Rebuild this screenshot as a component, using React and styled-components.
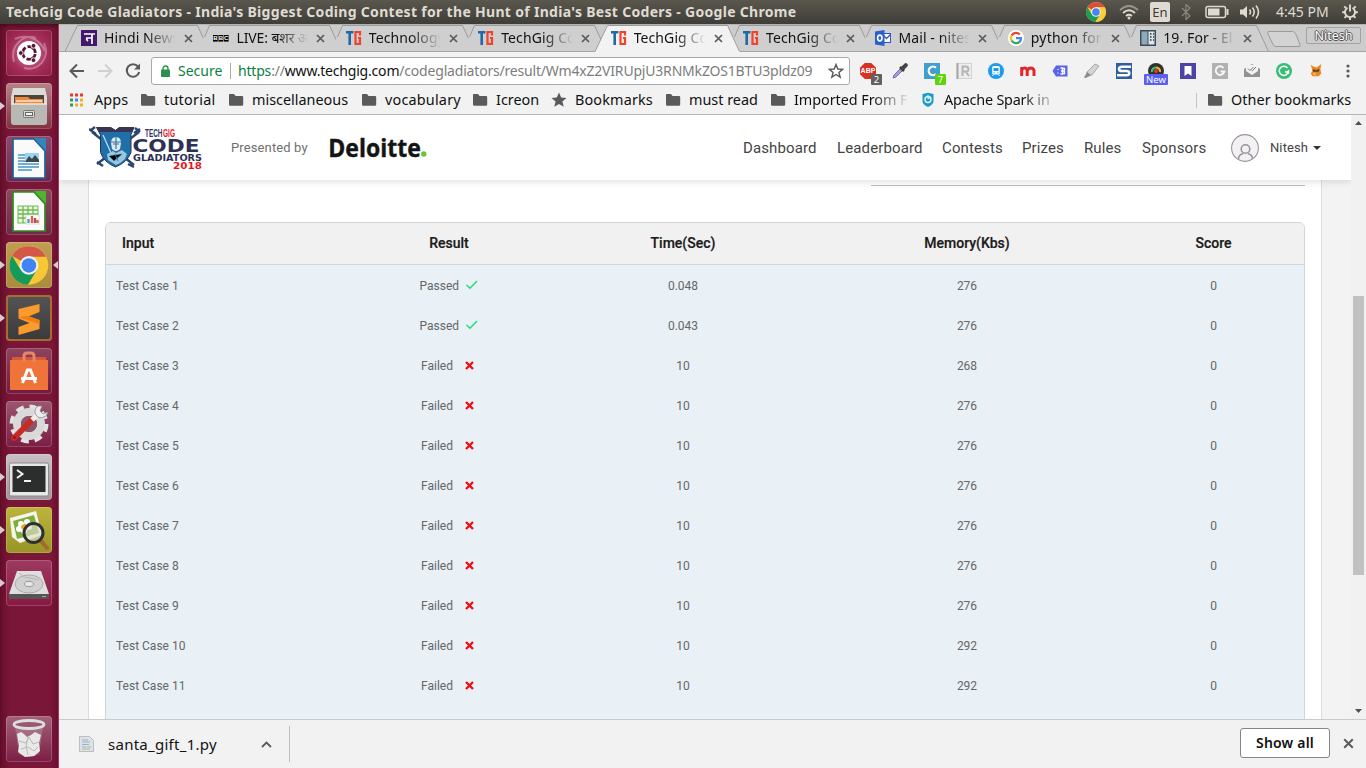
import React from "react";
import styled, { createGlobalStyle, css } from "styled-components";

const UI = '"Noto Sans", "Open Sans", sans-serif';

const GlobalStyle = createGlobalStyle`
  * { box-sizing: border-box; }
  html, body { margin: 0; padding: 0; overflow: hidden; }
  body { background: #f2f2f2; font-family: ${UI}; }
  svg { display: block; flex: none; }
`;

/* ---------- shell ---------- */
const Desktop = styled.div`
  width: 1366px;
  height: 768px;
  display: flex;
  flex-direction: column;
  overflow: hidden;
`;
const Panel = styled.header`
  height: 24px;
  flex: none;
  display: flex;
  align-items: center;
  padding-left: 6px;
  background: linear-gradient(#5a574d, #3e3d38);
  color: #dfdbd2;
`;
const PanelTitle = styled.div`
  flex: 1;
  margin-top: -2px;
  font-size: 14px;
  font-weight: 700;
  letter-spacing: 0.31px;
  white-space: nowrap;
`;
const Tray = styled.div`
  display: flex;
  align-items: center;
  width: 280px;
`;
const TrayItem = styled.div`
  width: ${(p) => p.$w}px;
  display: flex;
  flex: none;
`;
const Lang = styled.div`
  width: 20px;
  height: 20px;
  border-radius: 2px;
  background: #dfdbd2;
  color: #3c3b37;
  font-size: 13px;
  line-height: 20px;
  text-align: center;
`;
const Clock = styled.div`
  font-size: 14px;
  margin-top: -1px;
  white-space: nowrap;
`;
const Body = styled.div`
  flex: 1;
  display: flex;
  min-height: 0;
`;

/* ---------- launcher ---------- */
const Launcher = styled.nav`
  width: 59px;
  flex: none;
  display: flex;
  flex-direction: column;
  gap: 7px;
  padding: 6px 0 6px 6px;
  border-right: 1px solid #b0305f;
  background: linear-gradient(90deg, #640f2b 0, #7a1637 10px, #7a1738 50px, #6d1130 58px);
  box-shadow: inset 0 4px 4px -2px rgba(40, 0, 15, 0.6);
`;
const Tile = styled.div`
  position: relative;
  width: 46px;
  height: 46px;
  flex: none;
  border-radius: 4px;
  background: ${(p) => p.$bg};
  box-shadow: inset 0 0 0 1px ${(p) => p.$edge || "rgba(255,255,255,.18)"};
  ${(p) => p.$last && css`margin-top: auto;`}
`;
const RunMark = styled.i`
  position: absolute;
  left: -6px;
  top: 19px;
  border: 4px solid transparent;
  border-left: 5px solid #d8ccd2;
  border-right: 0;
`;
const FocusMark = styled.i`
  position: absolute;
  right: -6px;
  top: 19px;
  border: 4px solid transparent;
  border-right: 5px solid #d8ccd2;
  border-left: 0;
`;

/* ---------- browser ---------- */
const Browser = styled.main`
  flex: 1;
  min-width: 0;
  display: flex;
  flex-direction: column;
  background: #f2f2f2;
`;
const TabStrip = styled.div`
  height: 28px;
  flex: none;
  display: flex;
  padding-left: 6px;
  background: #cccccc;
  box-shadow: inset 0 -1px 0 #a5a5a5, inset 0 1px 0 #b3b3b3;
`;
const Tab = styled.div`
  position: relative;
  width: 145px;
  height: 28px;
  flex: none;
  margin-right: -12.6px;
  padding-left: 16px;
  display: flex;
  align-items: center;
  z-index: ${(p) => (p.$active ? 2 : 1)};
`;
const TabShape = styled.svg`
  position: absolute;
  left: 0;
  top: 0;
  z-index: -1;
`;
const TabTitle = styled.div`
  width: 71px;
  margin-left: 7px;
  overflow: hidden;
  white-space: nowrap;
  font-size: 14px;
  line-height: 20px;
  letter-spacing: ${(p) => p.$ls || 0}px;
  color: #111;
  -webkit-mask-image: linear-gradient(90deg, #000 42px, transparent 72px);
  mask-image: linear-gradient(90deg, #000 42px, transparent 72px);
`;
const TabClose = styled.div`
  margin-left: 9px;
`;
const NewTab = styled.svg`
  margin: 6px 0 0 10px;
`;
const Profile = styled.div`
  margin: 3px 5px 0 auto;
  width: 55px;
  height: 17px;
  border: 1px solid #a2a2a2;
  border-radius: 2px;
  font-size: 12.5px;
  line-height: 15px;
  text-align: center;
  color: #fff;
  text-shadow: 1px 0 #555, -1px 0 #555, 0 1px #555, 0 -1px #555;
`;
const Toolbar = styled.div`
  height: 37px;
  flex: none;
  display: flex;
  align-items: center;
  padding-left: 10px;
`;
const NavButton = styled.div`
  width: ${(p) => p.$w}px;
  flex: none;
`;
const Address = styled.div`
  width: 699px;
  height: 28px;
  flex: none;
  display: flex;
  align-items: center;
  padding-left: 9px;
  border: 1px solid #a9a9a9;
  border-radius: 3px;
  background: #fff;
  font-size: 14px;
  white-space: nowrap;
`;
const Secure = styled.span`
  width: 52px;
  flex: none;
  margin-left: 8px;
  color: #0b8043;
`;
const AddressRule = styled.i`
  width: 1px;
  height: 16px;
  flex: none;
  margin-right: 7px;
  background: #aaa;
`;
const Url = styled.span`
  width: 590px;
  flex: none;
  color: #7d7d7d;
  letter-spacing: -0.19px;
  em { font-style: normal; color: #0b8043; }
  b { font-weight: 400; color: #111; }
`;
const Extensions = styled.div`
  display: flex;
  margin-left: 2px;
`;
const Ext = styled.div`
  position: relative;
  width: 32px;
  display: flex;
  justify-content: center;
`;
const Badge = styled.span`
  position: absolute;
  left: ${(p) => p.$x}px;
  top: 11px;
  width: ${(p) => p.$w}px;
  height: 11px;
  border-radius: 1px;
  background: ${(p) => p.$bg};
  color: #fff;
  font-size: 9.5px;
  line-height: 11px;
  text-align: center;
`;
const Bookmarks = styled.div`
  height: 26px;
  flex: none;
  display: flex;
  padding: 0 0 4px 11px;
  border-bottom: 1px solid #b6b4b6;
  font-size: 14.4px;
  color: #111;
`;
const Bookmark = styled.div`
  width: ${(p) => p.$w}px;
  flex: none;
  display: flex;
  align-items: center;
  white-space: nowrap;
`;
const BookmarkText = styled.span`
  margin-left: 8px;
  letter-spacing: ${(p) => p.$ls ?? 0.1}px;
  ${(p) => p.$fade && css`
    width: 114px;
    overflow: hidden;
    -webkit-mask-image: linear-gradient(90deg, #000 78px, transparent 116px);
    mask-image: linear-gradient(90deg, #000 78px, transparent 116px);
  `}
`;
const OtherMarks = styled.div`
  display: flex;
  align-items: center;
  margin-left: auto;
  width: 170px;
  padding-left: 11px;
  white-space: nowrap;
  background: linear-gradient(#c4c4c4, #c4c4c4) 0 4px / 1px 15px no-repeat;
`;

/* ---------- page ---------- */
const Viewport = styled.div`
  flex: 1;
  min-height: 0;
  display: flex;
`;
const Page = styled.div`
  flex: 1;
  min-width: 0;
  overflow: hidden;
  display: flex;
  flex-direction: column;
  background: #f3f3f3;
  font-family: Roboto, sans-serif;
`;
const SiteHeader = styled.div`
  height: 65px;
  flex: none;
  display: flex;
  align-items: center;
  padding-left: 30px;
  background: #fff;
  box-shadow: 0 1px 8px rgba(0, 0, 0, 0.14);
  z-index: 1;
`;
const Presented = styled.div`
  width: 98px;
  margin-left: 28px;
  font-size: 13px;
  letter-spacing: 0.12px;
  color: #6f6f6f;
`;
const SiteNav = styled.div`
  display: flex;
  margin-left: auto;
  font-size: 15px;
  color: #444;
`;
const NavLink = styled.span`
  width: ${(p) => p.$w}px;
  letter-spacing: 0.12px;
`;
const User = styled.div`
  width: 120px;
  display: flex;
  align-items: center;
  font-size: 13px;
  color: #444;
  span { width: 38px; margin: 0 5px 0 11px; letter-spacing: 0.1px; }
`;
const Sheet = styled.section`
  flex: 1;
  min-height: 0;
  margin: 0 29px;
  padding: 0 16px;
  border: solid #dcdcdc;
  border-width: 0 1px;
  background: #fff;
  overflow: hidden;
`;
const SummaryRule = styled.div`
  height: 6px;
  margin: 0 0 36px 766px;
  border-bottom: 1px solid #bdbdbd;
`;
const Table = styled.div`
  border: 1px solid #d4d4d4;
  border-radius: 6px 6px 0 0;
  overflow: hidden;
`;
const cols = css`
  display: grid;
  grid-template-columns: 237px 212px 256px 312px 181px;
  align-items: center;
  text-align: center;
`;
const HeadRow = styled.div`
  ${cols}
  height: 42px;
  padding-bottom: 2px;
  background: #f1f1f1;
  border-bottom: 1px solid #d4d4d4;
  font-size: 14px;
  font-weight: 500;
  color: #1a1a1a;
  -webkit-text-stroke: 0.2px #1a1a1a;
`;
const Row = styled.div`
  ${cols}
  height: 40px;
  padding-top: 2px;
  background: #e9f1f7;
  font-size: 12px;
  color: #666;
`;
const FirstCell = styled.div`
  padding-left: ${(p) => p.$pad}px;
  text-align: left;
`;
const Result = styled.div`
  display: flex;
  align-items: center;
  width: 60px;
  margin-left: ${(p) => (p.$ok ? 76.500 : 78)}px;
  span { width: ${(p) => (p.$ok ? 46 : 44)}px; text-align: left; }
  svg { margin-top: -2px; }
`;
const Scrollbar = styled.div`
  width: 15px;
  flex: none;
  display: flex;
  flex-direction: column;
  align-items: center;
  justify-content: space-between;
  padding: 6px 0;
  background: #f1f1f1;
`;
const Thumb = styled.i`
  width: 11px;
  height: 279px;
  margin-top: 36px;
  background: #c1c1c1;
`;
const Shelf = styled.footer`
  height: 49px;
  flex: none;
  display: flex;
  align-items: center;
  padding-left: 20px;
  border-top: 1px solid #cbcbcb;
  background: #f2f2f2;
  color: #111;
`;
const Download = styled.div`
  width: 211px;
  height: 36px;
  display: flex;
  align-items: center;
  border-right: 1px solid #bdbdbd;
  font-size: 15px;
  span { width: 153px; margin-left: 14px; letter-spacing: 0.27px; }
`;
const ShowAll = styled.button`
  width: 90px;
  height: 30px;
  margin: -2px 13px 0 auto;
  padding: 0 0 2px;
  border: 1px solid #858585;
  border-radius: 3px;
  background: #fff;
  font: 600 14px ${UI};
  letter-spacing: 0.2px;
  color: #111;
`;
const ShelfClose = styled.div`
  margin: -2px 12px 0 0;
`;

/* ---------- drawings ---------- */
const ChromeMark = ({ s = 20 }) => (
  <svg width={s} height={s} viewBox="0 0 40 40">
    <circle cx="20" cy="20" r="20" fill="#f9cb35" />
    <path d="M20 20 2.7 10A20 20 0 0 1 37.3 10.5H20Z" fill="#dd4c3b" />
    <path d="M2.7 10A20 20 0 0 0 19 40L28 25 20 20 11 24Z" fill="#1b9d58" />
    <path d="M20 10.5H37.5A20 20 0 0 1 19 40L28.500 24.500Z" fill="#fbcd38" />
    <circle cx="20" cy="20" r="9.600" fill="#f3f3f3" />
    <circle cx="20" cy="20" r="7.600" fill="#4587f0" />
  </svg>
);
const Folder = () => (
  <svg width="16" height="16" viewBox="0 0 16 16">
    <path d="M1.500 2h4.500l1.600 2h6.400q1.200 0 1.200 1.200v7.300q0 1.200-1.200 1.200H2.200Q1 13.700 1 12.500V3q0-1 .500-1Z" fill="#5a5a5a" />
  </svg>
);
const Cross = ({ s = 9, c = "#5a5a5a", w = 1.900 }) => (
  <svg width={s} height={s} viewBox="0 0 9 9">
    <path d="M1 1 8 8M8 1 1 8" stroke={c} strokeWidth={w} />
  </svg>
);
const FavTG = () => (
  <svg width="16" height="16" viewBox="0 0 16 16">
    <path d="M0 1h7.400v2.500H5v11.500H2.400v-11.500H0Z" fill="#1f69a8" />
    <path d="M14 5.500V2H9.500V14H14V8H12" fill="none" stroke="#f4412c" strokeWidth="2.200" />
  </svg>
);
const FavHindi = () => (
  <svg width="16" height="16" viewBox="0 0 16 16">
    <rect width="16" height="16" fill="#43196b" />
    <path d="M3 4h11M11 4v10M11 8H5M6 8q-1 1.500 1 3" fill="none" stroke="#fff" strokeWidth="1.700" />
  </svg>
);
const FavBBC = () => (
  <svg width="16" height="16" viewBox="0 0 16 16">
    {[0, 5.400, 10.800].map((x, i) => (
      <g key={x}>
        <rect x={x} y="5" width="4.800" height="6.600" fill="#000" />
        <text x={x + 2.400} y="10.400" fontSize="6" fontWeight="700" textAnchor="middle" fill="#fff" fontFamily="Liberation Sans">{"BBC"[i]}</text>
      </g>
    ))}
  </svg>
);
const FavOutlook = () => (
  <svg width="16" height="16" viewBox="0 0 16 16">
    <rect x="8" y="3.500" width="7.500" height="9" fill="#fff" stroke="#2b57c0" />
    <path d="m8 5 3.500 3.500L15.500 4.500" fill="none" stroke="#2b57c0" strokeWidth="1.300" />
    <path d="M0 1.500 9.500 0v16L0 14.500Z" fill="#2b5fd0" />
    <ellipse cx="4.800" cy="8" rx="2.200" ry="2.900" fill="none" stroke="#fff" strokeWidth="1.600" />
  </svg>
);
const FavGoogle = () => (
  <svg width="16" height="16" viewBox="0 0 16 16">
    <circle cx="8" cy="8" r="8" fill="#fff" />
    <g fill="none" strokeWidth="2.300">
      <path d="M11.800 4.500A5 5 0 0 0 3.600 5.500" stroke="#ea4335" />
      <path d="M3.600 5.500a5 5 0 0 0 0 5" stroke="#fbbc05" />
      <path d="M3.600 10.500a5 5 0 0 0 8 1.200" stroke="#34a853" />
      <path d="M11.400 12A5 5 0 0 0 13 8.200H8" stroke="#4285f4" />
    </g>
  </svg>
);
const FavBook = () => (
  <svg width="16" height="16" viewBox="0 0 16 16">
    <rect width="16" height="16" fill="#3b4c59" />
    <rect x="1.500" y="1.500" width="6" height="13" fill="#8fa9bb" />
    <rect x="8.500" y="1.500" width="6" height="13" fill="#dbe5eb" />
    <path d="M10 4h1.500M10 7h1.500M10 10h1.500M13 4h1M13 7h1M13 10h1" stroke="#26333c" strokeWidth="1.600" />
  </svg>
);

const tabs = [
  ["Hindi News", FavHindi, 0.1],
  ["LIVE: बशर अल", FavBBC, -0.1],
  ["Technology J", FavTG, 0.1],
  ["TechGig Code", FavTG, 0.1],
  ["TechGig Code", FavTG, 0.1],
  ["TechGig Code", FavTG, 0.1],
  ["Mail - nitesh", FavOutlook, 0.1],
  ["python for l", FavGoogle, 0.2],
  ["19. For - Else", FavBook, 0.1],
];

const BrowserTab = ({ title, Icon, ls, active, first }) => (
  <Tab $active={active}>
    <TabShape width="145" height="28" viewBox="0 0 145 28">
      <path d="M0 28 12 1.500H132.500L145 28Z" fill={active ? "#f2f2f2" : "#cfcfcf"} />
      <path
        d={active || first ? "M0 27.500 12.500 1.500H132.500L144.500 27.500" : "M7.500 13 12.500 1.500H132.500L144.500 27.500"}
        fill="none"
        stroke="#9b9b9b"
      />
      {!active && <path d="M0 27.500H145" stroke="#a5a5a5" />}
    </TabShape>
    <Icon />
    <TabTitle $ls={ls}>{title}</TabTitle>
    <TabClose><Cross w={1.700} /></TabClose>
  </Tab>
);

const I = ({ children, s = 16 }) => (
  <svg width={s} height={s} viewBox="0 0 16 16">{children}</svg>
);

const ExtensionIcons = () => (
  <Extensions>
    <Ext>
      <I><path d="M4.800 0h6.400L16 4.800v6.400L11.200 16H4.800L0 11.200V4.800Z" fill="#d8311f" /><text x="8" y="10.300" textAnchor="middle" fontFamily="Liberation Sans" fontWeight="700" fontSize="7" fill="#fff">ABP</text></I>
      <Badge $x={19} $w={11} $bg="#616161">2</Badge>
    </Ext>
    <Ext><I><path d="m1 15 1-3 7-7 2 2-7 7Z" fill="#a99be0" stroke="#7b6bb5" /><path d="m8 4 4 4" stroke="#333" strokeWidth="2.500" /><path d="m10.500 5.500 3.300-3.300" stroke="#444" strokeWidth="4" strokeLinecap="round" /></I></Ext>
    <Ext>
      <I><rect width="16" height="16" fill="#3f9fd0" /><path d="M12 4.800A4.300 4.300 0 1 0 12 11" fill="none" stroke="#fff" strokeWidth="2.200" /></I>
      <Badge $x={19} $w={11} $bg="#5fd40d">7</Badge>
    </Ext>
    <Ext><I><rect x="1" y=".5" width="14.500" height="15" fill="#ededed" stroke="#d2d2d2" /><path d="M1.500 0v16" stroke="#a5a5a5" strokeWidth="2" /><path d="M6.500 13V3.500h3.300q2.700 0 2.700 2.500T9.800 8.500H6.500M9.500 8.500l3.500 4.500" fill="none" stroke="#b5b5b5" strokeWidth="2" /></I></Ext>
    <Ext><I><circle cx="8" cy="8" r="8" fill="#1d9bf0" /><rect x="4.200" y="3" width="7.600" height="8.500" rx="1.500" fill="#fff" /><path d="M5.500 5h5v3h-5Z" fill="#1d9bf0" /><path d="M5.500 9.800h1.200M9.300 9.800h1.200" stroke="#1d9bf0" /><path d="m5.500 11.500-1 1.500M10.500 11.500l1 1.500" stroke="#fff" /></I></Ext>
    <Ext><I><path d="M1.700 13V4M1.700 7q1-2 3-2t2.500 2.500V13M7.500 7.500q1-2.500 3.300-2.500T14 7.500V13" fill="none" stroke="#e3262b" strokeWidth="3" /></I></Ext>
    <Ext><I><path d="M4 2.500h11.500v11H4L.500 8Z" fill="#5865e8" /><path d="M6 6v1M6 9.500v1M8.500 5h2v6h-2M11 5.500h1.500v5H11M9 8h3" stroke="#fff" strokeWidth="1.300" fill="none" /></I></Ext>
    <Ext><I><path d="m3 9 8-8 4 2-7 9-4 1Z" fill="#d3d3d3" stroke="#999" strokeWidth=".8" /><path d="m3 9 4 3-5 3-2-.500Z" fill="#8d8d8d" /></I></Ext>
    <Ext><I><rect width="16" height="16" fill="#2e5e9e" /><path d="M15 3.800H6q-3 0-3 2.100T6 8h4.500q2.800 0 2.800 2.200t-2.800 2.100H1" fill="none" stroke="#fff" strokeWidth="2.600" /></I></Ext>
    <Ext>
      <I><circle cx="8" cy="8" r="8" fill="#303036" /><path d="M4 9a4 4 0 0 1 4-4.500" stroke="#35c66b" strokeWidth="2.200" fill="none" /><path d="M8 4.500A4 4 0 0 1 12 9" stroke="#f0b42c" strokeWidth="2.200" fill="none" /><circle cx="8" cy="8" r="2" fill="#d83b35" /></I>
      <Badge $x={4} $w={24} $bg="#5a5ff0">New</Badge>
    </Ext>
    <Ext><I><rect width="16" height="16" fill="#4b45a5" /><path d="M4.500 3h7v10L8 10.500 4.500 13Z" fill="#fff" /></I></Ext>
    <Ext><I><rect width="16" height="16" fill="#b1b1b1" /><path d="M11.500 5A4.300 4.300 0 1 0 12.300 8.500H8.500" fill="none" stroke="#f7f7f7" strokeWidth="1.900" /></I></Ext>
    <Ext><I><path d="M0 6 8 1l8 5v8H0Z" fill="#929292" /><path d="M2 2h12v6L8 12 2 8Z" fill="#f2f2f2" /><path d="m4 5.500 2 2 3.500-3.500M7.500 7l1 .700L12 4" fill="none" stroke="#777" /></I></Ext>
    <Ext><I><circle cx="8" cy="8" r="8" fill="#38bd76" /><path d="M11.500 5A4.600 4.600 0 1 0 12.300 9H9M12.500 7v4" fill="none" stroke="#fff" strokeWidth="1.500" /></I></Ext>
    <Ext><I s={14}><path d="m2 2 3 2 4 1 5-4-1 6 1 5-3 3H4l-2-3 2-3Z" fill="#ee8421" /><path d="m4 8 2-1 2 1.500 4-2-1 3.500H5Z" fill="#5b3b24" /><path d="M4 11h4v3H5Z" fill="#f5b05c" /></I></Ext>
    <Ext><I><g fill="#5a5a5a"><circle cx="8" cy="3" r="1.600" /><circle cx="8" cy="8" r="1.600" /><circle cx="8" cy="13" r="1.600" /></g></I></Ext>
  </Extensions>
);

const L = ({ children }) => <svg width="46" height="46" viewBox="0 0 46 46">{children}</svg>;

const DocSheet = ({ c, c2, children }) => (
  <L>
    <path d="M7 3h21l11 12v27H7Z" fill="#fafafa" stroke={c} strokeWidth="1.700" />
    <path d="M28 2h12v13Z" fill={c2} />
    {children}
  </L>
);

const launcherApps = [
  { bg: "radial-gradient(circle at 50% 50%, #d98ba5 0, #a52f59 55%, #8c1c45 100%)", art: (
    <L>
      <path d="M8 32C3 16 18 3 30 8M38 13c7 15-6 29-20 25M9 9c10-5 24-2 30 12" fill="none" stroke="#fff" strokeOpacity=".3" strokeWidth="2" />
      <circle cx="23" cy="23" r="12" fill="#fff" />
      <circle cx="23" cy="23" r="6.300" fill="none" stroke="#5b1634" strokeWidth="2.800" strokeDasharray="11.200 2" strokeDashoffset="-1" />
      <g fill="#5b1634" stroke="#fff" strokeWidth=".9"><circle cx="14.800" cy="23" r="2.400" /><circle cx="27.500" cy="15.800" r="2.400" /><circle cx="27.500" cy="30.200" r="2.400" /></g>
    </L>) },
  { bg: "linear-gradient(#b78288,#83303f)", run: true, art: (
    <L>
      <path d="M7 5h32l2 9v7H5v-7Z" fill="#dadad7" />
      <path d="M8 12h30v10H8Z" fill="#4b4540" />
      <path d="M9 14h13l2 2h13v6H9Z" fill="#ef8838" /><path d="M10 18h26" stroke="#fce3c5" strokeWidth="1.500" />
      <path d="M5 21h36v18q0 3-3 3H8q-3 0-3-3Z" fill="#b8b8b5" /><path d="M5 21h36" stroke="#e9e9e9" strokeWidth="1.500" />
      <rect x="17.500" y="27.500" width="11" height="7" rx="1" fill="#d8d8d6" stroke="#777" /><rect x="19.500" y="29.500" width="7" height="3" fill="#f4f4f4" stroke="#666" />
    </L>) },
  { bg: "linear-gradient(#8b4a6c,#6f2850)", art: (
    <DocSheet c="#1d6392" c2="#3187bd">
      <path d="M12 19h21M12 22h21M12 25h21M12 28h21M12 31h21M12 34h14" stroke="#4596c9" strokeWidth="1.700" />
      <rect x="19" y="17" width="14" height="9" fill="#9ad3f0" /><path d="m19 26 4-6 3 3 3-4 4 5v2Z" fill="#37474a" />
    </DocSheet>) },
  { bg: "linear-gradient(#8b4a5c,#6f2845)", art: (
    <DocSheet c="#2e8b1f" c2="#4fb42d">
      <rect x="12" y="17" width="20" height="17" fill="#eaf8df" stroke="#70b654" /><path d="M12 21h20M12 25h20M12 29h20M17 17v17M22 17v17M27 17v17" stroke="#70b654" strokeWidth="1.300" />
      <rect x="20" y="26" width="13" height="9" fill="#fff" stroke="#c8c8c8" strokeWidth=".6" /><path d="M22.500 34v-4" stroke="#4c9bd0" strokeWidth="2.400" /><path d="M26 34v-7M31.500 34v-3" stroke="#e1632e" strokeWidth="2.400" /><path d="M29 34v-5" stroke="#ad4870" strokeWidth="2.400" />
    </DocSheet>) },
  { bg: "linear-gradient(#c29d55,#ab8b3c)", run: true, focus: true, art: (
    <L><g transform="translate(3.500 4) scale(.97)"><circle cx="20" cy="20" r="20" fill="#f6c838" /><path d="M20 20 2.700 10A20 20 0 0 1 37.600 11H20Z" fill="#d4574a" /><path d="M2.700 10A20 20 0 0 0 19 40L28 25 20 20 11 24Z" fill="#159a5a" /><circle cx="20" cy="20" r="9.600" fill="#eef1f6" /><circle cx="20" cy="20" r="7.500" fill="#4285ee" /></g></L>) },
  { bg: "linear-gradient(#555,#3a3a3a)", edge: "#c07c35", run: true, art: (
    <L><rect x="1" y="1" width="44" height="44" rx="3" fill="none" stroke="#a86b30" strokeWidth="2" /><path d="m12.500 14 21-5v8l-11 4.500 11 3.500v9l-21 6v-8l11-4-11-4.500Z" fill="#fb9a2d" /><path d="m12.500 22 10-1 11 4v4Z" fill="#f07f13" /></L>) },
  { bg: "linear-gradient(#8f445e,#731a3e)", art: (
    <L><path d="M6 9h34v5H6Z" fill="#d55a38" /><path d="M4 12h38v30H4Z" fill="#f0743a" /><path d="M18 14V8q0-3 3-3h4q3 0 3 3v6" fill="none" stroke="#e98466" strokeWidth="3" /><path d="m16.500 35 5-13h3l5 13M15 30.500h16" fill="none" stroke="#fff" strokeWidth="3" /></L>) },
  { bg: "linear-gradient(#9b5770,#7c1d44)", art: (
    <L>
      <circle cx="23" cy="23" r="16.500" fill="none" stroke="#e2e2e2" strokeWidth="6" strokeDasharray="7.400 5.560" />
      <circle cx="23" cy="23" r="12" fill="none" stroke="#d9d9d9" strokeWidth="8" /><circle cx="23" cy="23" r="8" fill="#8d5468" />
      <path d="m8 37 19-19" stroke="#c92a24" strokeWidth="6" strokeLinecap="round" /><path d="m26 19 5-5" stroke="#eee" strokeWidth="5" />
      <path d="M32 5q-5 4-2 9t10 1l2-4-5 2-3-3 2-5Z" fill="#ececec" stroke="#8b8b8b" strokeWidth=".8" /><circle cx="8.500" cy="36.500" r="1.200" fill="#7a1414" />
    </L>) },
  { bg: "linear-gradient(#c8c0c6,#a4939c)", run: true, art: (
    <L><rect x="3.500" y="9" width="39" height="33" rx="1.500" fill="#e7e7e7" stroke="#8b8b8b" /><rect x="6.500" y="12" width="33" height="26" fill="#2c2e2d" /><path d="m11 16 5.500 4-5.500 4M18 27h7" fill="none" stroke="#f1f1f1" strokeWidth="2" /></L>) },
  { bg: "linear-gradient(#bdb43c,#989526)", run: true, art: (
    <L>
      <path d="m4 11 26-7 6 24-22 8-8-6Z" fill="#f5f5ec" /><path d="m7 14 21-6 5 18-22 6Z" fill="#7fae3e" />
      <g fill="#fff"><circle cx="15" cy="17" r="3" /><circle cx="21" cy="15" r="3" /><circle cx="23" cy="20" r="3" /><circle cx="13" cy="22" r="3" /><circle cx="18" cy="24" r="3" /></g><circle cx="18" cy="20" r="2.800" fill="#f2a81d" />
      <path d="m35 34 6 7" stroke="#a5682c" strokeWidth="4" strokeLinecap="round" /><circle cx="27.500" cy="26" r="9.500" fill="#dcdccb" fillOpacity=".65" stroke="#2e3133" strokeWidth="3" />
    </L>) },
  { bg: "linear-gradient(#9d3a60,#8a1842)", run: true, art: (
    <L><path d="M11 11h24l8 23H3Z" fill="#dedede" /><path d="M3 34h40v5H3Z" fill="#555" /><ellipse cx="23" cy="24" rx="14" ry="9" fill="#d0d0d0" stroke="#aaa" /><ellipse cx="23" cy="24" rx="4.500" ry="2.600" fill="#e8e8e8" stroke="#999" /><path d="m13 13 5 4 15 3" fill="none" stroke="#b6b6b6" /><path d="M36 36.500h4" stroke="#aaa" /></L>) },
  { bg: "linear-gradient(#a3627a,#7c1d44)", last: true, art: (
    <L>
      <path d="M9 11h28l-4 27q-10 6-20 0Z" fill="#b99aa8" fillOpacity=".45" />
      <path d="m11 18 4-2 3 2 3 3 4-2 4-3 6 3-2 8 1 8-6 5-9 1-7-5 1-6Z" fill="#e8e8e6" /><path d="m13 25 7 2 3-6 4 7 6-2M15 33l7-2 6 4 4-4M22 21l-2 9 2 9" fill="none" stroke="#b9b9b7" />
      <ellipse cx="23" cy="8.500" rx="15" ry="4" fill="none" stroke="#dcdedb" strokeWidth="2.800" />
    </L>) },
];

const GladiatorLogo = () => (
  <svg width="114" height="46" viewBox="0 0 114 46">
    <path d="m3 5 42 33M50 5 8 37M1 4l5-4M0 2l7 5M46 1l5 4M45 6l6-4M8 35l6 4M39 37l6 3" transform="translate(0 2)" stroke="#28466f" strokeWidth="2.400" />
    <path d="M7.500 2.500h14l5 3 4-3H45l-3 7v18q-4 10-15.500 14.500Q15 37.500 11.500 27.500V10Z" fill="#1f6fa9" stroke="#2d3354" />
    <path d="M7.500 2h14l5 3 4-3H45l-2.500 5h-32Z" fill="#383452" />
    <path d="m14 10 12 27" stroke="#c5e2f4" strokeWidth="1.200" />
    <path d="M22 18q0-6 5-6t5 6l-1 6q-4 4-8 0Z" fill="#d9eaf4" /><path d="M21 17h12M27 11v13M24 19h6" stroke="#3c789e" strokeWidth="1.200" />
    <path d="m18 29 6-3 3 2 6-3 5 4-2 5q-4 4-9 6l-8-5Z" fill="#9ac6df" /><path d="m20 31 5 5 8-7M26 29l3 7" stroke="#2f76a5" />
    <g fontWeight="700">
      <text x="56" y="11.500" fontFamily="Liberation Sans" fontSize="10" textLength="17.500" lengthAdjust="spacingAndGlyphs" fill="#2d3561">TECH</text>
      <text x="74" y="11.500" fontFamily="Liberation Sans" fontSize="10" textLength="12" lengthAdjust="spacingAndGlyphs" fill="#e8151b">GIG</text>
      <text x="43.500" y="26.500" fontFamily="DejaVu Sans" fontSize="17" textLength="67" lengthAdjust="spacingAndGlyphs" fill="#2d3156">CODE</text>
      <text x="44" y="35.500" fontFamily="DejaVu Sans" fontSize="8" textLength="69" lengthAdjust="spacingAndGlyphs" fill="#2d3156">GLADIATORS</text>
      <text x="84" y="44" fontFamily="DejaVu Sans" fontSize="8.500" textLength="29" lengthAdjust="spacingAndGlyphs" fill="#e8151b">2018</text>
    </g>
  </svg>
);
const DeloitteLogo = () => (
  <svg width="100" height="24" viewBox="0 0 100 24">
    <text x="-.7" y="20.500" fontFamily="Open Sans" fontWeight="700" fontSize="24.500" textLength="92.500" lengthAdjust="spacingAndGlyphs" fill="#141414" stroke="#141414" strokeWidth=".4">Deloitte</text>
    <circle cx="94.800" cy="18" r="2.700" fill="#6cc52c" />
  </svg>
);

const Tick = () => (
  <svg width="12" height="10" viewBox="0 0 12 10"><path d="m.500 5 3.500 3.200L11 1" fill="none" stroke="#22dd7e" strokeWidth="1.500" /></svg>
);

const rows = [
  [true, "0.048", 276], [true, "0.043", 276], [false, "10", 268], [false, "10", 276],
  [false, "10", 276], [false, "10", 276], [false, "10", 276], [false, "10", 276],
  [false, "10", 276], [false, "10", 292], [false, "10", 292],
];

export default function App() {
  return (
    <Desktop>
      <GlobalStyle />
      <Panel>
        <PanelTitle>TechGig Code Gladiators - India's Biggest Coding Contest for the Hunt of India's Best Coders - Google Chrome</PanelTitle>
        <Tray>
          <TrayItem $w={33}><ChromeMark /></TrayItem>
          <TrayItem $w={31}>
            <svg width="20" height="16" viewBox="0 0 20 16" fill="none" stroke="#dfdbd2" strokeWidth="1.800">
              <path d="M1 6q9-8 18 0" strokeOpacity=".5" /><path d="M4 9q6-5.500 12 0" /><path d="M7 12q3-2.500 6 0" /><circle cx="10" cy="14" r=".6" />
            </svg>
          </TrayItem>
          <TrayItem $w={31}><Lang>En</Lang></TrayItem>
          <TrayItem $w={24}>
            <svg width="10" height="16" viewBox="0 0 10 16"><path d="m1 4 8 8-4 3.500V.500L9 4l-8 8" fill="none" stroke="#8b887f" strokeWidth="1.200" /></svg>
          </TrayItem>
          <TrayItem $w={35}>
            <svg width="24" height="14" viewBox="0 0 24 14"><rect x="1" y="1.500" width="19.500" height="11" rx="2" fill="none" stroke="#dfdbd2" strokeWidth="1.500" /><rect x="3" y="3.500" width="11.500" height="7" fill="#dfdbd2" /><path d="M22.500 4v6" stroke="#dfdbd2" strokeWidth="2" /></svg>
          </TrayItem>
          <TrayItem $w={36}>
            <svg width="21" height="16" viewBox="0 0 21 16"><path d="M0 5.500h3L7 2v12L3 10.500H0Z" fill="#dfdbd2" /><path d="M9.500 5.500q2 2.500 0 5M12.500 3.500q3.500 4.500 0 9M16 1.500q5 6.500 0 13" fill="none" stroke="#dfdbd2" strokeWidth="1.600" /></svg>
          </TrayItem>
          <TrayItem $w={66}><Clock>4:45 PM</Clock></TrayItem>
          <svg width="16" height="16" viewBox="0 0 16 16" fill="none" stroke="#dfdbd2"><path d="M5.500 3.800a5 5 0 1 0 5 0M8 .500v7" strokeWidth="1.900" /><path d="m4 4-1.700-1.700M12 4l1.700-1.700M3.200 8.200H.200M12.800 8.200h3M4.500 11.800l-2 2M11.500 11.800l2 2M8 13v3" strokeWidth="1.900" /></svg>
        </Tray>
      </Panel>
      <Body>
        <Launcher>
          {launcherApps.map((a, i) => (
            <Tile key={i} $bg={a.bg} $edge={a.edge} $last={a.last}>
              {a.run && <RunMark />}
              {a.art}
              {a.focus && <FocusMark />}
            </Tile>
          ))}
        </Launcher>
        <Browser>
          <TabStrip>
            {tabs.map(([t, Icon, ls], i) => (
              <BrowserTab key={i} title={t} Icon={Icon} ls={ls} active={i === 4} first={i === 0} />
            ))}
            <NewTab width="36" height="18" viewBox="0 0 36 18"><path d="M1 1.500h24.500q2 0 3 2l4.500 11q.500 2-1 2H9q-2 0-3-2L.800 3.500q-.500-2 1-2Z" fill="#d3d3d3" stroke="#9b9b9b" /></NewTab>
            <Profile>Nitesh</Profile>
          </TabStrip>
          <Toolbar>
            <NavButton $w={28}><svg width="16" height="16" viewBox="0 0 16 16"><path d="M15 8H2M8 1.500 1.500 8 8 14.500" fill="none" stroke="#5a5a5a" strokeWidth="2" /></svg></NavButton>
            <NavButton $w={28}><svg width="16" height="16" viewBox="0 0 16 16"><path d="M1 8h13M8 1.500 14.500 8 8 14.500" fill="none" stroke="#d0d0d0" strokeWidth="2" /></svg></NavButton>
            <NavButton $w={26}><svg width="16" height="16" viewBox="0 0 16 16"><path d="M13 3.500A6.300 6.300 0 1 0 14.200 9" fill="none" stroke="#5a5a5a" strokeWidth="2" /><path d="M15 .500v6H9Z" fill="#5a5a5a" /></svg></NavButton>
            <Address>
              <svg width="9" height="12" viewBox="0 0 9 12"><path d="M2 5V3.500a2.500 2.500 0 0 1 5 0V5" fill="none" stroke="#2d8f4c" strokeWidth="1.400" /><rect y="4.500" width="9" height="7.500" rx=".8" fill="#2d8f4c" /></svg>
              <Secure>Secure</Secure>
              <AddressRule />
              <Url><em>https</em>://<b>www.techgig.com</b>/codegladiators/result/Wm4xZ2VIRUpjU3RNMkZOS1BTU3pldz09</Url>
              <svg width="16" height="16" viewBox="0 0 16 16"><path d="m8 1.500 1.800 4.500 4.900.300-3.800 3.100 1.300 4.800L8 11.500l-4.200 2.700 1.300-4.800L1.300 6.300 6.200 6Z" fill="none" stroke="#5a5a5a" strokeWidth="1.400" /></svg>
            </Address>
            <ExtensionIcons />
          </Toolbar>
          <Bookmarks>
            <Bookmark $w={70}>
              <svg width="16" height="16" viewBox="0 0 16 16">
                {["#e33b2e", "#e33b2e", "#e33b2e", "#2c9e53", "#4285f4", "#f2b01e", "#2c9e53", "#f2b01e", "#f2b01e"].map((c, i) => (
                  <rect key={i} x={(i % 3) * 5} y={1.500 + Math.floor(i / 3) * 5} width="3" height="3" fill={c} />
                ))}
              </svg>
              <BookmarkText>Apps</BookmarkText>
            </Bookmark>
            <Bookmark $w={88}><Folder /><BookmarkText $ls={0.25}>tutorial</BookmarkText></Bookmark>
            <Bookmark $w={133}><Folder /><BookmarkText $ls={0}>miscellaneous</BookmarkText></Bookmark>
            <Bookmark $w={111}><Folder /><BookmarkText $ls={0.2}>vocabulary</BookmarkText></Bookmark>
            <Bookmark $w={79}><Folder /><BookmarkText $ls={0}>Icreon</BookmarkText></Bookmark>
            <Bookmark $w={114}>
              <svg width="16" height="16" viewBox="0 0 16 16"><path d="m8 .500 2.200 5 5.300.400-4.100 3.500 1.400 5.400L8 11.900l-4.800 2.900 1.400-5.400L.500 5.900l5.300-.400Z" fill="#5a5a5a" /></svg>
              <BookmarkText $ls={0.15}>Bookmarks</BookmarkText>
            </Bookmark>
            <Bookmark $w={105}><Folder /><BookmarkText $ls={0}>must read</BookmarkText></Bookmark>
            <Bookmark $w={150}><Folder /><BookmarkText $fade $ls={-0.05}>Imported From Firefox</BookmarkText></Bookmark>
            <Bookmark $w={140}>
              <svg width="16" height="16" viewBox="0 0 16 16"><path d="M2.500 2 8 .800 13.500 2v8q-1 3-5.500 5-4.500-2-5.500-5Z" fill="#1f9cc5" /><circle cx="8" cy="7.500" r="3" fill="none" stroke="#e7f6fb" strokeWidth="1.400" /><path d="M8 3v4l3-2" stroke="#e7f6fb" fill="none" /></svg>
              <BookmarkText $fade $ls={-0.2}>Apache Spark in</BookmarkText>
            </Bookmark>
            <OtherMarks><Folder /><BookmarkText $ls={0.08}>Other bookmarks</BookmarkText></OtherMarks>
          </Bookmarks>
          <Viewport>
            <Page>
              <SiteHeader>
                <GladiatorLogo />
                <Presented>Presented by</Presented>
                <DeloitteLogo />
                <SiteNav>
                  <NavLink $w={94}>Dashboard</NavLink>
                  <NavLink $w={105}>Leaderboard</NavLink>
                  <NavLink $w={80}>Contests</NavLink>
                  <NavLink $w={62}>Prizes</NavLink>
                  <NavLink $w={58}>Rules</NavLink>
                  <NavLink $w={89}>Sponsors</NavLink>
                </SiteNav>
                <User>
                  <svg width="28" height="28" viewBox="0 0 28 28"><circle cx="14" cy="14" r="13.400" fill="#f3f1f4" stroke="#98939b" strokeWidth="1.100" /><circle cx="14.500" cy="15" r="4.300" fill="none" stroke="#98939b" strokeWidth="1.600" /><path d="M7.500 25q0-4.500 4.500-5.300M21.500 25q0-4.500-4.500-5.300" fill="none" stroke="#98939b" strokeWidth="1.500" /></svg>
                  <span>Nitesh</span>
                  <svg width="8" height="4" viewBox="0 0 8 4"><path d="M0 0h8L4 4Z" fill="#333" /></svg>
                </User>
              </SiteHeader>
              <Sheet>
                <SummaryRule />
                <Table>
                  <HeadRow>
                    <FirstCell $pad={16}>Input</FirstCell><div>Result</div><div>Time(Sec)</div><div>Memory(Kbs)</div><div>Score</div>
                  </HeadRow>
                  {rows.map(([ok, time, mem], i) => (
                    <Row key={i}>
                      <FirstCell $pad={10}>Test Case {i + 1}</FirstCell>
                      <Result $ok={ok}><span>{ok ? "Passed" : "Failed"}</span>{ok ? <Tick /> : <Cross s={9} c="#f00d0d" w={2.300} />}</Result>
                      <div>{time}</div><div>{mem}</div><div>0</div>
                    </Row>
                  ))}
                  <Row />
                </Table>
              </Sheet>
            </Page>
            <Scrollbar>
              <svg width="7" height="4" viewBox="0 0 7 4"><path d="M0 4h7L3.500 0Z" fill="#505050" /></svg>
              <Thumb />
              <svg width="7" height="4" viewBox="0 0 7 4"><path d="M0 0h7L3.500 4Z" fill="#505050" /></svg>
            </Scrollbar>
          </Viewport>
          <Shelf>
            <Download>
              <svg width="15" height="16" viewBox="0 0 15 16"><path d="M.500.500h10l4 4v11H.500Z" fill="#dfe1e4" stroke="#bcbec2" /><path d="M3 4h6M3 6h8M3 8.500h7" stroke="#93b3d3" /><path d="M3 11h4" stroke="#d692bd" /><path d="M8 11h4M3 13h8" stroke="#9fc59f" /></svg>
              <span>santa_gift_1.py</span>
              <svg width="11" height="7" viewBox="0 0 11 7"><path d="m1 6 4.500-4.500L10 6" fill="none" stroke="#5a5a5a" strokeWidth="1.800" /></svg>
            </Download>
            <ShowAll>Show all</ShowAll>
            <ShelfClose><Cross s={11} w={1.600} /></ShelfClose>
          </Shelf>
        </Browser>
      </Body>
    </Desktop>
  );
}
